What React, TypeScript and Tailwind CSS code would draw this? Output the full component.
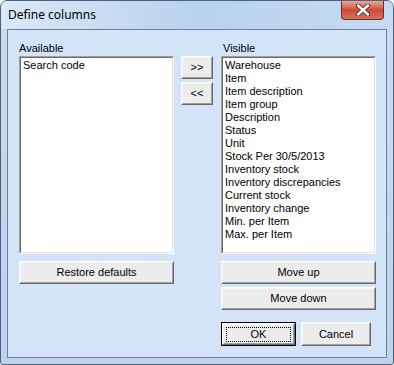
import React from "react"

const font = { fontFamily: '"Liberation Sans", Arial, sans-serif' }

const available = ["Search code"]
const visible = [
  "Warehouse",
  "Item",
  "Item description",
  "Item group",
  "Description",
  "Status",
  "Unit",
  "Stock Per 30/5/2013",
  "Inventory stock",
  "Inventory discrepancies",
  "Current stock",
  "Inventory change",
  "Min. per Item",
  "Max. per Item",
]

function Btn({
  children,
  className = "",
  isDefault = false,
}: {
  children: React.ReactNode
  className?: string
  isDefault?: boolean
}) {
  // classic 3D raised button
  const inner = (
    <div className="h-full w-full border border-t-[#ffffff] border-l-[#ffffff] border-r-[#696969] border-b-[#696969]">
      <div className="h-full w-full border border-t-[#f4f4f4] border-l-[#f4f4f4] border-r-[#a0a0a0] border-b-[#a0a0a0] bg-[#ececec] flex items-center justify-center">
        {isDefault ? (
          <div className="flex h-[15px] w-[calc(100%-4px)] items-center justify-center border border-dotted border-black">
            {children}
          </div>
        ) : (
          children
        )}
      </div>
    </div>
  )
  return (
    <button
      type="button"
      className={
        "text-[11px] leading-[13px] text-black " +
        (isDefault ? "border border-black " : "") +
        className
      }
    >
      {inner}
    </button>
  )
}

function ListBox({ items }: { items: string[] }) {
  return (
    <div className="h-[198px] w-full border border-t-[#a0a0a0] border-l-[#a0a0a0] border-r-[#ffffff] border-b-[#ffffff]">
      <div className="h-full w-full border border-t-[#696969] border-l-[#696969] border-r-[#e3e3e3] border-b-[#e3e3e3] bg-white pl-[2px] pt-[1px]">
        {items.map((it) => (
          <div key={it} className="h-[13px] text-[11px] leading-[13px] text-black whitespace-nowrap">
            {it}
          </div>
        ))}
      </div>
    </div>
  )
}

export default function App() {
  return (
    <div className="w-[394px] h-[365px] bg-white" style={font}>
      <div className="w-[394px] h-[365px] rounded-t-[7px] rounded-b-[3px] border border-[#4f6178] bg-gradient-to-b from-[#c9dcf3] to-[#bcd3ee] flex flex-col">
        {/* title bar */}
        <div className="h-[28px] flex items-start justify-between bg-gradient-to-r from-[#dbe8f7] via-[#b8d2ef] to-[#c6dbf3] rounded-t-[6px]">
          <span className="pl-[7px] pt-[7px] text-[12px] leading-[14px] text-black" style={{ fontFamily: '"Noto Sans", "Open Sans", sans-serif' }}>
            Define columns
          </span>
          <div className="mr-[9px] h-[19px] w-[43px] rounded-b-[4px] border border-t-0 border-[#6e2c24] bg-gradient-to-b from-[#e8a99c] via-[#cc4a36] to-[#d8735d] flex items-center justify-center">
            <svg width="16" height="12" viewBox="0 0 16 12">
              <path d="M3 1.5 L13 10.5 M13 1.5 L3 10.5" stroke="#4a2a26" strokeWidth="4.2" strokeLinecap="round" />
              <path d="M3 1.5 L13 10.5 M13 1.5 L3 10.5" stroke="#ffffff" strokeWidth="2.4" strokeLinecap="round" />
            </svg>
          </div>
        </div>

        {/* client area */}
        <div className="mx-[6px] h-[329px] border border-[#6f7f94] bg-[#d3e4f9] pl-[11px] pt-[12px]">
          <div className="flex">
            {/* left column */}
            <div className="w-[155px] flex flex-col">
              <div className="h-[14px] text-[11px] leading-[13px] text-black">Available</div>
              <ListBox items={available} />
              <Btn className="mt-[7px] h-[23px] w-[155px]">Restore defaults</Btn>
            </div>

            {/* arrows */}
            <div className="ml-[7px] mt-[14px] w-[32px] flex flex-col gap-[3px]">
              <Btn className="h-[23px] w-[32px]">&gt;&gt;</Btn>
              <Btn className="h-[23px] w-[32px]">&lt;&lt;</Btn>
            </div>

            {/* right column */}
            <div className="ml-[8px] w-[155px] flex flex-col">
              <div className="h-[14px] pl-[2px] text-[11px] leading-[13px] text-black">Visible</div>
              <ListBox items={visible} />
              <Btn className="mt-[7px] h-[23px] w-[155px]">Move up</Btn>
              <Btn className="mt-[3px] h-[23px] w-[155px]">Move down</Btn>
              <div className="mt-[12px] flex gap-[5px]">
                <Btn isDefault className="h-[24px] w-[75px]">OK</Btn>
                <Btn className="h-[24px] w-[70px]">Cancel</Btn>
              </div>
            </div>
          </div>
        </div>
      </div>
    </div>
  )
}
